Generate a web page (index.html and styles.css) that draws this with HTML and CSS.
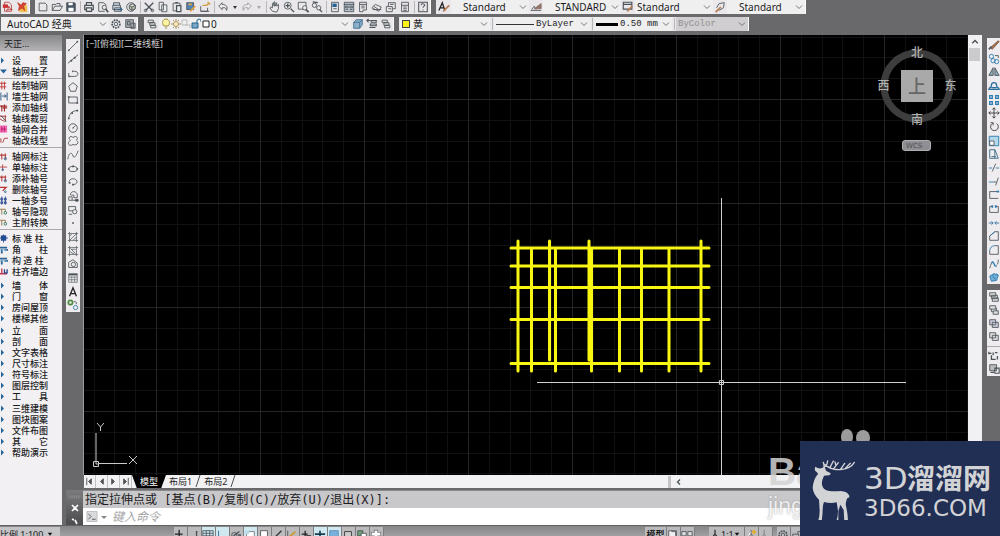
FILE: index.html
```html
<!DOCTYPE html>
<html lang="zh-CN">
<head>
<meta charset="utf-8">
<title>AutoCAD 经典</title>
<link rel="stylesheet" href="styles.css">
</head>
<body>
<svg class="defs" aria-hidden="true">
  <symbol id="chev" viewBox="0 0 8 8"><path d="M1 2.5l3 3 3-3"/></symbol>
  <symbol id="tri" viewBox="0 0 8 8"><path d="M1 1l3 3-3 3z" fill="#24659a" stroke="none"/></symbol>
  <symbol id="page" viewBox="0 0 14 14"><path d="M2.500 2.500h7l2 2v7h-9z"/></symbol>
  <symbol id="copy" viewBox="0 0 14 14"><path d="M2.500 1.500h5v9h-5zM5.500 4.500h6v8h-6z" fill="#eee"/></symbol>
  <symbol id="axis" viewBox="0 0 9 9"><path d="M0 3h7M2 1v7M6 1v7" stroke="#b8433f" stroke-width="1.300"/><circle cx="6" cy="7" r="1.300" stroke="#2b6f96"/></symbol>
  <symbol id="pillar" viewBox="0 0 9 9"><path d="M0 2.500h8M2 4v5M5 5h4" stroke="#2b6292" stroke-width="2"/><path d="M0 5h8" stroke="#86b4d4"/></symbol>
  <symbol id="layers" viewBox="0 0 14 14"><path d="M2.500 2.500h6v3h-6zM4.500 5.500h6v3h-6zM5.500 8.500h6v3h-6z" fill="#ddd"/></symbol>
</svg>

<header class="bars">
  <div class="bar">
    <div class="group">
      <button class="tool" aria-label="导出 PDF"><svg viewBox="0 0 14 14"><path d="M3 1.500h5l3 3V12H3z" stroke="#b44"/><path d="M1 4h6v4H1z" fill="#cc3034" stroke="none"/><path d="M5 11c2-1 3-4 3-5 1 3 3 4 4 4-2 0-5 0-7 1z" stroke="#b33"/></svg></button>
      <button class="tool" aria-label="附着 PDF"><svg viewBox="0 0 14 14"><path d="M4 5h9v8H4z" fill="#f0c04c" stroke="none"/><path d="M2 2l4 3 2-3 4 1-3 3 1 5-3-3-4 3 1-5z" fill="#d5462f" stroke="#c63a30"/></svg></button>
    </div>
    <div class="group">
      <button class="tool" aria-label="新建"><svg><use href="#page"/></svg></button>
      <button class="tool" aria-label="打开"><svg viewBox="0 0 14 14"><path d="M1.500 11V4h4l1-1h4v3M1.500 11l3-5h9l-3 5z"/></svg></button>
      <button class="tool" aria-label="保存"><svg viewBox="0 0 14 14"><path d="M2 2h9l1 1v9H2z" fill="#485563"/><path d="M4 2h5v3H4zM4 8h6v4H4z" fill="#fff" stroke="none"/></svg></button>
      <i class="sep"></i>
      <button class="tool" aria-label="打印"><svg viewBox="0 0 14 14"><path d="M4 5V2h6v3M4 10H2V5h10v5h-2M4 8h6v4H4z" stroke-width="1.400"/></svg></button>
      <button class="tool" aria-label="打印预览"><svg viewBox="0 0 14 14"><path d="M9 12H2V2h6l3 3"/><circle cx="8.500" cy="7.500" r="2.500"/><path d="M10 9l3 4" stroke-width="2"/></svg></button>
      <button class="tool" aria-label="发布"><svg viewBox="0 0 14 14"><path d="M3 5V2h7v3M2 5h9v5H2zM4 8h8v4H4z" fill="#c6d1dc"/><path d="M8 10h5M11 8l2 2-2 2" stroke="#245f91"/></svg></button>
      <button class="tool" aria-label="三维打印"><svg viewBox="0 0 14 14"><circle cx="7" cy="7" r="5"/><path d="M5 5l4-2 3 2v4l-4 2-3-2zM5 5l3 2 4-2M8 7v4" fill="#b9bea5"/></svg></button>
      <i class="sep"></i>
      <button class="tool" aria-label="剪切"><svg viewBox="0 0 14 14"><path d="M2 2l9 9M12 2l-9 9" stroke-width="1.500"/><circle cx="3" cy="11" r="1.500"/><circle cx="11" cy="11" r="1.500"/></svg></button>
      <button class="tool" aria-label="复制"><svg><use href="#copy"/></svg></button>
      <button class="tool" aria-label="粘贴"><svg viewBox="0 0 14 14"><path d="M2.500 2.500h8v9h-8z"/><path d="M5 2h3M6.500 5.500h5v7h-5z" fill="#eee" stroke-width="1.500"/></svg></button>
      <button class="tool" aria-label="特性匹配"><svg viewBox="0 0 14 14"><path d="M2 2h8v8H2z" fill="#4f83b4"/><path d="M4 4h4M12 6l-6 6" stroke="#e3a64a" stroke-width="2"/></svg></button>
      <button class="tool" aria-label="块编辑器"><svg viewBox="0 0 14 14"><path d="M2 6v6h8V8M2 12h10"/><path d="M4 5h5l3-3M10 1l3 3" stroke="#cf9a42" stroke-width="1.500"/></svg></button>
      <i class="sep"></i>
      <button class="tool" aria-label="放弃"><svg viewBox="0 0 14 14"><path d="M6 2L2 6l4 4V8c4-1 5 1 5 3 2-4 0-7-5-7z"/></svg></button>
      <button class="tool mini" aria-label="放弃列表"><svg viewBox="0 0 8 8"><path d="M2 3h4L4 6z" fill="#333" stroke="none"/></svg></button>
      <button class="tool dim" aria-label="重做"><svg viewBox="0 0 14 14"><path d="M8 2l4 4-4 4V8C4 7 3 9 3 11 1 7 3 4 8 4z"/></svg></button>
      <button class="tool mini dim" aria-label="重做列表"><svg viewBox="0 0 8 8"><path d="M2 3h4L4 6z" fill="#666" stroke="none"/></svg></button>
      <i class="sep"></i>
      <button class="tool" aria-label="平移"><svg viewBox="0 0 14 14"><path d="M4 12L1 8l1-1 2 1V3l1-1 1 4V1h1v5l2-4v4l2-2v5l-2 4z"/></svg></button>
      <button class="tool" aria-label="实时缩放"><svg viewBox="0 0 14 14"><circle cx="5.500" cy="5.500" r="4"/><path d="M3 5.500h5M5.500 3v5M9 9l4 4" stroke-width="1.500"/></svg></button>
      <button class="tool" aria-label="窗口缩放"><svg viewBox="0 0 14 14"><path d="M1.500 1.500h9v8h-9z"/><circle cx="9" cy="8" r="2.500" fill="#eee"/><path d="M10.500 10l3 3" stroke-width="2"/></svg></button>
      <button class="tool" aria-label="缩放上一个"><svg viewBox="0 0 14 14"><circle cx="4" cy="5" r="2.500"/><circle cx="9" cy="8" r="2.500"/><path d="M2 1l6 1M10 10l3 3" stroke-width="1.500"/></svg></button>
      <i class="sep"></i>
      <button class="tool" aria-label="特性"><svg viewBox="0 0 14 14"><path d="M3 1.500h8v11H3z"/><path d="M4 3h5v4H4z" fill="#236197" stroke="none"/><path d="M5 9h4"/></svg></button>
      <button class="tool" aria-label="设计中心"><svg viewBox="0 0 14 14"><path d="M1.500 1.500h11v11h-11zM1 4h12M3 6h3v2H3zM8 6h3v2H8zM3 10h3M8 10h3" fill="#bcc5cf"/></svg></button>
      <button class="tool" aria-label="工具选项板"><svg viewBox="0 0 14 14"><path d="M3 1.500h8v9H7v2H3zM3 4h8M5 6h4M5 8h4"/></svg></button>
      <button class="tool" aria-label="图纸集"><svg viewBox="0 0 14 14"><path d="M1 8l4-4 7 3-3 5zM2 10h10M3 6l6 4"/></svg></button>
      <button class="tool" aria-label="标记集"><svg viewBox="0 0 14 14"><path d="M1.500 6.500h7v6h-7zM4 6V2h8v7H9M4 9h3M6 4h4"/></svg></button>
      <button class="tool" aria-label="计算器"><svg viewBox="0 0 14 14"><path d="M3 1.500h8v11H3zM3 5h8M5 7h4M5 9h4M5 11h4"/></svg></button>
      <i class="sep"></i>
      <button class="tool" aria-label="帮助"><svg viewBox="0 0 14 14"><path d="M2 1.500h10v11H2zM5 5c0-3 4-2 4 0 0 1-2 1-2 3M7 10v1" stroke-width="1.200"/></svg></button>
    </div>
    <div class="group">
      <button class="tool" aria-label="文字样式"><svg viewBox="0 0 14 14"><path d="M1 11l4-9 3 9M3 8h4" stroke="#222" stroke-width="1.500"/><path d="M6 12l7-7" stroke="#b87b4e" stroke-width="2"/></svg></button>
      <label class="combo w78 indent"><select aria-label="文字样式名"><option>Standard</option></select><svg><use href="#chev"/></svg></label>
      <button class="tool" aria-label="标注样式"><svg viewBox="0 0 14 14"><path d="M1 11h12M2 10l3-4 2 4"/><path d="M5 9l8-6v6z" fill="#8e7266" stroke="#8e7266"/></svg></button>
      <label class="combo w78 indent"><select aria-label="标注样式名"><option>STANDARD</option></select><svg><use href="#chev"/></svg></label>
      <button class="tool" aria-label="表格样式"><svg viewBox="0 0 14 14"><path d="M1.500 1.500h10v8h-10zM2 4h10" stroke-width="1.300"/><path d="M6 12l6-6" stroke="#b87b4e" stroke-width="2"/></svg></button>
      <label class="combo w78"><select aria-label="表格样式名"><option>Standard</option></select><svg><use href="#chev"/></svg></label>
      <button class="tool" aria-label="多重引线样式"><svg viewBox="0 0 14 14"><path d="M3 8l3-5 6-1-1 6-5 3"/><path d="M2 13l6-6" stroke="#b87b4e" stroke-width="2"/></svg></button>
      <label class="combo w78 indent"><select aria-label="多重引线样式名"><option>Standard</option></select><svg><use href="#chev"/></svg></label>
    </div>
  </div>

  <div class="bar">
    <div class="group">
      <label class="combo w108 pad"><select aria-label="工作空间"><option>AutoCAD 经典</option></select><svg><use href="#chev"/></svg></label>
      <button class="tool" aria-label="工作空间设置"><svg viewBox="0 0 14 14"><circle cx="7" cy="7" r="4.500" stroke-width="2" stroke-dasharray="2 1"/><circle cx="7" cy="7" r="2"/></svg></button>
      <button class="tool" aria-label="我的工作空间"><svg viewBox="0 0 14 14"><path d="M2 2h9v9H2zM4 4h3v4H4zM8 6h5v6H8z" fill="#a8adb2"/></svg></button>
    </div>
    <div class="group late">
      <button class="tool" aria-label="图层特性"><svg><use href="#layers"/></svg></button>
      <label class="combo w192">
        <svg class="ic" viewBox="0 0 10 14"><path d="M3 9C0 6 2 2 5 2s5 4 2 7zM4 11h2" stroke="#9b8d42" fill="#fdf3a5"/></svg>
        <svg class="ic" viewBox="0 0 10 14"><circle cx="5" cy="7" r="2.500" stroke="#b0965c" fill="#f8ecc5"/><path d="M5 2v2M5 10v2M0 7h2M8 7h2M2 3l1 1M8 3L7 4M2 11l1-1M8 11l-1-1" stroke="#a88f5d"/></svg>
        <svg class="ic" viewBox="0 0 10 14"><path d="M1 3h5v5H1zM4 8h5v3" stroke="#bbb"/></svg>
        <svg class="ic" viewBox="0 0 10 14"><path d="M1 6h6v5H1z" fill="#78a8c6" stroke="#24658e"/><path d="M6 6V3l2-1 2 1v2" stroke="#24658e"/></svg>
        <svg class="ic" viewBox="0 0 10 14"><path d="M2 4h6v6H2z" stroke="#222" fill="#fff"/></svg>
        <select aria-label="图层"><option>0</option></select><svg><use href="#chev"/></svg></label>
      <button class="tool" aria-label="图层置为当前"><svg viewBox="0 0 14 14"><path d="M2 5l3-3h7v6l-3 4H2zM2 5h7v7M9 5l3-3" fill="#8dafc9" stroke="#3e6d90"/></svg></button>
      <button class="tool" aria-label="上一个图层"><svg viewBox="0 0 14 14"><path d="M6 3h6v2H6zM5 7h7v2H5zM4 11h7M5 3H1M3 1L1 3l2 2" stroke-width="1.200"/></svg></button>
      <button class="tool" aria-label="图层状态管理器"><svg><use href="#layers"/></svg></button>
    </div>
    <div class="group">
      <label class="combo w90"><span class="swatch"></span><select aria-label="颜色"><option>黄</option></select><svg><use href="#chev"/></svg></label>
      <i class="sep"></i>
      <label class="combo w96 mono"><span class="line"></span><select aria-label="线型"><option>ByLayer</option></select><svg><use href="#chev"/></svg></label>
      <i class="sep"></i>
      <label class="combo w78 mono"><span class="line thick"></span><select aria-label="线宽"><option>0.50 mm</option></select><svg><use href="#chev"/></svg></label>
      <i class="sep"></i>
      <label class="combo w72 mono off"><select aria-label="打印样式" disabled><option>ByColor</option></select><svg><use href="#chev"/></svg></label>
    </div>
  </div>
</header>

<div class="main">
  <aside class="palette">
    <h1>天正...</h1>
    <nav class="menu" aria-label="天正菜单">
      <div class="set">
        <button><svg><use href="#tri"/></svg>设　　置</button>
        <button><svg viewBox="0 0 8 8"><path d="M0 2h7L3.500 6z" fill="#24659a" stroke="none"/></svg>轴网柱子</button>
      </div>
      <div class="set ruled">
        <button><svg viewBox="0 0 9 9"><path d="M0 2h7M0 6h7M2 0v9M5 0v9" stroke="#c23434"/></svg>绘制轴网</button>
        <button><svg viewBox="0 0 9 9"><path d="M1 0v9M8 0v9M2 4h5M5 2l2 2-2 2" stroke="#234e7c"/></svg>墙生轴网</button>
        <button><svg viewBox="0 0 9 9"><path d="M0 3h8M2 2v7M5 1v8M3 5h5" stroke="#a32c2c" stroke-width="1.300"/></svg>添加轴线</button>
        <button><svg viewBox="0 0 9 9"><path d="M0 2h7M6 1v7M0 5l5 3" stroke="#a32c2c"/><path d="M1 1l6 7" stroke="#444"/></svg>轴线裁剪</button>
        <button><svg viewBox="0 0 9 9"><path d="M0 0h8v8H0z" fill="#f56bb4" stroke="none"/><path d="M2 1v6M5 1v6M1 4h6" stroke="#b51e65"/></svg>轴网合并</button>
        <button><svg viewBox="0 0 9 9"><path d="M1 2v5M3 7l2-5h4" stroke="#a33"/></svg>轴改线型</button>
      </div>
      <div class="set ruled">
        <button><svg><use href="#axis"/></svg>轴网标注</button>
        <button><svg viewBox="0 0 9 9"><path d="M0 4h8M3 1v7" stroke="#b8433f"/><circle cx="3" cy="7" r="1" stroke="#276e97"/></svg>单轴标注</button>
        <button><svg><use href="#axis"/></svg>添补轴号</button>
        <button><svg viewBox="0 0 9 9"><path d="M0 2h7L3 6" stroke="#b8332f" stroke-width="1.400"/><circle cx="6" cy="7" r="1" stroke="#276e97"/></svg>删除轴号</button>
        <button><svg viewBox="0 0 9 9"><path d="M2 0v9M6 0v9" stroke="#28498f"/><path d="M1 2h2v2H1zM5 2h2v2H5zM1 6h2v2H1zM5 6h2v2H5z" stroke="#28498f"/></svg>一轴多号</button>
        <button><svg viewBox="0 0 9 9"><path d="M0 2h6v3M2 2v6" stroke="#927339"/><circle cx="6" cy="6" r="1.500" stroke="#28785e"/></svg>轴号隐现</button>
        <button><svg viewBox="0 0 9 9"><path d="M0 2h6v3M2 2v6" stroke="#927339"/><circle cx="6" cy="6" r="1.500" stroke="#28785e"/></svg>主附转换</button>
      </div>
      <div class="set ruled wide">
        <button><svg viewBox="0 0 9 9"><path d="M1 1h6v6H1z" fill="#214d91" stroke="none"/><path d="M0 4h9M4 0v9" stroke="#214d91"/></svg>标 准 柱</button>
        <button><svg><use href="#pillar"/></svg>角　　柱</button>
        <button><svg><use href="#pillar"/></svg>构 造 柱</button>
        <button><svg viewBox="0 0 9 9"><path d="M0 7h8M2 1v7" stroke="#c33750" stroke-width="1.500"/><path d="M5 2v4h3V2" stroke="#284c92" stroke-width="1.500"/></svg>柱齐墙边</button>
      </div>
      <div class="set">
        <button><svg><use href="#tri"/></svg>墙　　体</button>
        <button><svg><use href="#tri"/></svg>门　　窗</button>
        <button><svg><use href="#tri"/></svg>房间屋顶</button>
        <button><svg><use href="#tri"/></svg>楼梯其他</button>
      </div>
      <div class="set">
        <button><svg><use href="#tri"/></svg>立　　面</button>
        <button><svg><use href="#tri"/></svg>剖　　面</button>
        <button><svg><use href="#tri"/></svg>文字表格</button>
        <button><svg><use href="#tri"/></svg>尺寸标注</button>
        <button><svg><use href="#tri"/></svg>符号标注</button>
        <button><svg><use href="#tri"/></svg>图层控制</button>
        <button><svg><use href="#tri"/></svg>工　　具</button>
      </div>
      <div class="set">
        <button><svg><use href="#tri"/></svg>三维建模</button>
        <button><svg><use href="#tri"/></svg>图块图案</button>
        <button><svg><use href="#tri"/></svg>文件布图</button>
        <button><svg><use href="#tri"/></svg>其　　它</button>
        <button><svg><use href="#tri"/></svg>帮助演示</button>
      </div>
    </nav>
  </aside>

  <div class="work">
    <div class="upper">
      <div class="rail draw">
        <button aria-label="直线"><svg viewBox="0 0 14 14"><path d="M2 12L12 2"/><path d="M2 12h0M12 2h0" stroke-width="2" stroke-linecap="round"/></svg></button>
        <button aria-label="构造线"><svg viewBox="0 0 14 14"><path d="M1 12L13 2"/><path d="M5 9h0M9 5.500h0" stroke-width="2.500" stroke-linecap="round"/></svg></button>
        <button aria-label="多段线"><svg viewBox="0 0 14 14"><path d="M2 11h7c5 0 5-6 0-6H7M2 7v4"/><path d="M2 11h1M6 5h1" stroke-width="2"/></svg></button>
        <button aria-label="多边形"><svg viewBox="0 0 14 14"><path d="M7 2l5 4-2 6H4L2 6z"/></svg></button>
        <button aria-label="矩形"><svg viewBox="0 0 14 14"><path d="M2 3.500h10v7H2z"/><path d="M1 3.500h2M11 10.500h2" stroke-width="2"/></svg></button>
        <button aria-label="圆弧"><svg viewBox="0 0 14 14"><path d="M2 12C3 6 7 3 12 3"/><path d="M1 12h2M5 6h2M11 3h2" stroke-width="2"/></svg></button>
        <button aria-label="圆"><svg viewBox="0 0 14 14"><circle cx="7" cy="7" r="5"/><path d="M7 7l3-3M6 7h2"/></svg></button>
        <button aria-label="修订云线"><svg viewBox="0 0 14 14"><path d="M4 6C0 3 5 0 7 3c3-3 7 0 4 3 4 3 0 7-4 5-4 3-8-1-3-5z"/></svg></button>
        <button aria-label="样条曲线"><svg viewBox="0 0 14 14"><path d="M1 12C2 3 6 4 7 8s4 0 6-6"/></svg></button>
        <button aria-label="椭圆"><svg viewBox="0 0 14 14"><ellipse cx="7" cy="7" rx="5" ry="3"/><path d="M1 7h2M11 7h2M6 4h2" stroke-width="2"/></svg></button>
        <button aria-label="椭圆弧"><svg viewBox="0 0 14 14"><path d="M3 8C1 4 7 2 10 4s2 6-3 6"/><path d="M6 10h2M2 8h2" stroke-width="2"/></svg></button>
        <button aria-label="插入块"><svg viewBox="0 0 14 14"><path d="M4 6c0-6 8-5 8 0v3H8V6H5M2 8h4v4H2zM6 12h6"/><path d="M10 11h3v2h-3z" fill="#444"/></svg></button>
        <button aria-label="创建块"><svg viewBox="0 0 14 14"><path d="M2 3h8v5H2z"/><circle cx="9" cy="9" r="2.500" fill="#eee"/><path d="M2 12h4"/></svg></button>
        <button aria-label="点"><svg viewBox="0 0 14 14"><path d="M6 7h2" stroke-width="2"/></svg></button>
        <button aria-label="图案填充"><svg viewBox="0 0 14 14"><path d="M3 1v12M11 1v12M1 3h12M1 11h12M3 6l3-3M3 11l8-8M7 11l4-4" stroke="#666c70"/></svg></button>
        <button aria-label="渐变色"><svg viewBox="0 0 14 14"><path d="M3 1v12M11 1v12M1 3h12M1 11h12M4 4l6 6M4 8l5 3M5 5h5" stroke="#666c70"/></svg></button>
        <button aria-label="面域"><svg viewBox="0 0 14 14"><path d="M2 11V5l5-3 5 4v5z"/><circle cx="7.500" cy="7.500" r="2.500"/></svg></button>
        <button aria-label="表格"><svg viewBox="0 0 14 14"><path d="M2 2h10v10H2zM2 6h10M2 9h10M5.500 5v7M9 5v7" stroke="#777d81"/><path d="M2 3h10" stroke-width="2"/></svg></button>
        <button aria-label="多行文字"><svg viewBox="0 0 14 14"><path d="M3 12L7 2l4 10M4.500 9h5" stroke="#222" stroke-width="1.500"/></svg></button>
        <button aria-label="添加选定对象"><svg viewBox="0 0 14 14"><circle cx="4" cy="4" r="2.500" stroke="#4d8b40" stroke-width="2"/><circle cx="10" cy="10" r="2.500" stroke="#3380b2"/><path d="M8 3c3 0 3 1 3 3"/></svg></button>
      </div>

      <div class="view">
        <div class="stage">
          <svg class="drawing" role="img" aria-label="轴网图">
            <defs>
              <pattern id="grid" x="72" y="64" width="104" height="104" patternUnits="userSpaceOnUse">
                <path d="M21.500 0v104M42.500 0v104M62.500 0v104M83.500 0v104M0 21.500h104M0 42.500h104M0 62.500h104M0 83.500h104" stroke="#101113"/>
                <path d="M.5 0v104M0 .5h104" stroke="#232529"/>
              </pattern>
            </defs>
            <rect width="100%" height="100%" fill="url(#grid)" stroke="none"/>
            <g transform="translate(-84 -35)">
              <path d="M518 241v130M531.500 250v121M549.500 241v119M555.500 250v121M589 241v119M591.500 250v121M619.500 250v121M641.500 250v121M669 250v121M701 241v130M511 248h198M511 266h198M511 287.500h198M511 319.500h198M511 363.500h198" stroke="#f9f612" stroke-width="3" stroke-linecap="round"/>
              <path d="M721.500 198v278M537 382.500h369M719.500 380.500h4v4h-4z" stroke="#d0d0d0"/>
              <path d="M96 461v-28M99 463.500h28M93.500 461.500h5v5h-5zM96 461v3h3M97 423l3.500 4v4M104 423l-3.500 4M129 456l8 8M137 456l-8 8" stroke="#c9c9c9"/>
            </g>
          </svg>
          <span class="caption">[−][俯视][二维线框]</span>
          <div class="cube">
            <svg class="ring" viewBox="0 0 82 82"><circle cx="41" cy="41" r="33" stroke="#3d3d3e" stroke-width="7"/></svg>
            <span class="n">北</span><span class="w">西</span><button class="top">上</button><span class="e">东</span><span class="s">南</span>
          </div>
          <button class="wcs">WCS</button>
        </div>
        <div class="vscroll"><svg viewBox="0 0 14 14"><path d="M4 9l3-3 3 3" stroke-width="1.500"/></svg><i></i></div>
      </div>

      <div class="right">
        <div class="rail modify">
          <button aria-label="删除"><svg viewBox="0 0 14 14"><path d="M3 10l2 2 8-9-1-1z" fill="#a8754f" stroke="#76513b"/><path d="M1 12l3-3" stroke-width="2"/></svg></button>
          <button aria-label="复制对象"><svg viewBox="0 0 14 14"><circle cx="4" cy="4" r="2.500" stroke="#2779b0"/><circle cx="6" cy="9" r="2.500" stroke="#2779b0"/><circle cx="10" cy="10" r="2.500" stroke="#2779b0"/><path d="M8 3h4v3"/></svg></button>
          <button aria-label="镜像"><svg viewBox="0 0 14 14"><path d="M6 2v9H1zM8 2v9h5z" fill="#8aa9bd"/></svg></button>
          <button aria-label="偏移"><svg viewBox="0 0 14 14"><path d="M1 11c0-3 3-1 3-5s6-4 6 0 3 2 3 5zM4 9h6" stroke="#2b6e9e" stroke-width="1.500"/></svg></button>
          <button aria-label="阵列"><svg viewBox="0 0 14 14"><path d="M2 2h3v3H2zM9 2h3v3H9zM2 9h3v3H2zM9 9h3v3H9z" stroke="#2779b0" stroke-width="1.500"/></svg></button>
          <button aria-label="移动"><svg viewBox="0 0 14 14"><path d="M7 1v12M1 7h12M5 3l2-2 2 2M5 11l2 2 2-2M3 5L1 7l2 2M11 5l2 2-2 2" stroke="#333"/></svg></button>
          <button aria-label="旋转"><svg viewBox="0 0 14 14"><path d="M5 3a4.500 4.500 0 1 0 5 0M3 2h3v3" stroke="#333"/></svg></button>
          <button aria-label="缩放"><svg viewBox="0 0 14 14"><path d="M1.500 1.500h11v11h-11z" fill="#b5d8eb" stroke="#2779b0"/><path d="M2 7h5v5H2z" fill="#fff"/></svg></button>
          <button aria-label="拉伸"><svg viewBox="0 0 14 14"><path d="M2 2h6v10H2zM8 2l4 10H8M4 10h5" stroke="#31627f"/></svg></button>
          <button aria-label="修剪"><svg viewBox="0 0 14 14"><path d="M1 7h4M9 7h4" stroke="#2779b0"/><path d="M5 11l4-9"/></svg></button>
          <button aria-label="延伸"><svg viewBox="0 0 14 14"><path d="M1 7h6" stroke="#2779b0"/><path d="M7 7h3M9 11l3-9"/></svg></button>
          <button aria-label="打断于点"><svg viewBox="0 0 14 14"><path d="M12 3H2v8h10"/><path d="M10 3h3" stroke="#2779b0" stroke-width="2"/></svg></button>
          <button aria-label="打断"><svg viewBox="0 0 14 14"><path d="M5 4H2v7h10V4H9"/><path d="M4 4h2M8 4h2" stroke="#2779b0" stroke-width="3"/></svg></button>
          <button aria-label="合并"><svg viewBox="0 0 14 14"><path d="M1 7h5M8 7h5M4 5l2 2-2 2M10 5L8 7l2 2" stroke="#2d6f9c"/></svg></button>
          <button aria-label="倒角"><svg viewBox="0 0 14 14"><path d="M2 7l6-5h4v10H2z"/><path d="M2 7l6-5" stroke="#2779b0"/></svg></button>
          <button aria-label="圆角"><svg viewBox="0 0 14 14"><path d="M2 8v4h10V2H8"/><path d="M2 8c0-3 2-6 6-6" stroke="#2779b0"/></svg></button>
          <button aria-label="光顺曲线"><svg viewBox="0 0 14 14"><path d="M2 12c1-2 1-4 2-6M10 8c2-1 2-4 2-6"/><path d="M4 6c3-5 3 6 6 3" stroke="#2779b0" stroke-width="1.500"/></svg></button>
          <button aria-label="分解"><svg viewBox="0 0 14 14"><path d="M2 6l5-3 5 2-2 6-6 1zM5 5l4 5M10 3l2 2" fill="#70aed5" stroke="#2779b0"/></svg></button>
        </div>
        <div class="rail order">
          <button aria-label="前置"><svg viewBox="0 0 14 14"><path d="M2 2h7v4H2zM5 8h7v4H5zM4 5h7v4H4z" fill="#ddd"/></svg></button>
          <button aria-label="后置"><svg viewBox="0 0 14 14"><path d="M2 2h7v4H2zM6 8h6v4H6zM4 6v3h2M9 5h1v3" fill="#ddd"/></svg></button>
          <button aria-label="置于对象之上"><svg viewBox="0 0 14 14"><path d="M2 2h7v6H2zM5 5h7v6H5z" fill="#ccd"/></svg></button>
          <button aria-label="置于对象之下"><svg viewBox="0 0 14 14"><path d="M5 5h7v6H5zM2 2h7v6H2z" fill="#ddd"/></svg></button>
          <i class="rule"></i>
          <button aria-label="注释前置"><svg viewBox="0 0 14 14"><path d="M1 4h3M6 3v3M8 3h3M4 6v5h5M11 7v4M1 2v3" stroke-width="1.500"/></svg></button>
          <button aria-label="填充后置"><svg viewBox="0 0 14 14"><path d="M2 2h8v7H2z" fill="#bbb"/><path d="M8 6h5v6H8zM3 11h4" stroke-width="1.300"/></svg></button>
        </div>
      </div>
    </div>

    <div class="tabs">
      <button class="nav" aria-label="第一个"><svg viewBox="0 0 12 12"><path d="M3 2v8"/><path d="M8 3v6L5 6z" fill="#555"/></svg></button>
      <button class="nav" aria-label="上一个"><svg viewBox="0 0 12 12"><path d="M8 3v6L5 6z" fill="#555"/></svg></button>
      <button class="nav" aria-label="下一个"><svg viewBox="0 0 12 12"><path d="M4 3v6l3-3z" fill="#555"/></svg></button>
      <button class="nav" aria-label="最后一个"><svg viewBox="0 0 12 12"><path d="M9 2v8"/><path d="M4 3v6l3-3z" fill="#555"/></svg></button>
      <button class="tab active">模型</button>
      <button class="tab">布局1</button><svg class="slash" viewBox="0 0 6 12"><path d="M1 12L5 0"/></svg>
      <button class="tab">布局2</button><svg class="slash" viewBox="0 0 6 12"><path d="M1 12L5 0"/></svg>
      <span class="hscroll"><i></i><svg viewBox="0 0 8 8"><path d="M5 1.500L2.500 4 5 6.500" stroke-width="1.300"/></svg></span>
    </div>

    <div class="command">
      <div class="grip">
        <svg class="dots" viewBox="0 0 16 4"><path d="M1 1h14M1 3h14" stroke="#a5a5a6" stroke-dasharray="1 1"/></svg>
        <button aria-label="关闭"><svg viewBox="0 0 8 8"><path d="M1 1l6 6M7 1L1 7" stroke="#fff" stroke-width="1.700"/></svg></button>
        <button aria-label="自定义"><svg viewBox="0 0 8 8"><path d="M1 2l2 1M4 3l2 4" stroke="#fff" stroke-width="1.700"/></svg></button>
      </div>
      <div class="console">
        <p>指定拉伸点或 [基点(B)/复制(C)/放弃(U)/退出(X)]:</p>
        <div class="entry">
          <svg class="prompt" viewBox="0 0 12 12"><path d="M.5.500h11v11H.500z" fill="#d9dadc" stroke="#bbb"/><path d="M2 3l3 3-3 3M6 9h4" stroke="#555"/></svg>
          <svg class="drop" viewBox="0 0 8 8"><path d="M1 3h6L4 6z" fill="#888" stroke="none"/></svg>
          <input type="text" aria-label="命令" placeholder="键入命令">
        </div>
      </div>
    </div>
  </div>
</div>

<footer class="status">
  <button class="scale">比例 1:100 <svg viewBox="0 0 8 8"><path d="M1 1h6L4 5z" fill="#111" stroke="none"/></svg></button>
  <div class="toggles">
    <button aria-label="推断约束"><svg viewBox="0 0 14 14"><path d="M6 1v12M1 6h9M8 8l4 4" stroke="#222" stroke-width="1.500"/></svg></button>
    <button aria-label="捕捉"><svg viewBox="0 0 14 14"><path d="M10 3v8H3M9 3h2" stroke-width="1.500"/></svg></button>
    <button aria-label="栅格" class="on"><svg viewBox="0 0 14 14"><path d="M1 2h12v10H1zM1 5h12M1 8h12M5 2v10M9 2v10"/></svg></button>
    <button aria-label="正交" class="on"><svg viewBox="0 0 14 14"><path d="M3 2v8h9" stroke="#26638f"/></svg></button>
    <button aria-label="极轴"><svg viewBox="0 0 14 14"><circle cx="5" cy="7" r="3"/><path d="M4 8l7-5M9 7h3v4H9" stroke-width="1.500"/></svg></button>
    <button aria-label="对象捕捉" class="on"><svg viewBox="0 0 14 14"><path d="M3 3h9v9H3z" fill="#fff" stroke="#777"/><path d="M1 2h5v4H1z" fill="#b9dceb" stroke="none"/></svg></button>
    <button aria-label="三维捕捉"><svg viewBox="0 0 14 14"><path d="M3 2h8v8l-4 2-4-2z" fill="#fff"/></svg></button>
    <button aria-label="对象追踪"><svg viewBox="0 0 14 14"><path d="M11 2L3 10h9" stroke="#333" stroke-width="1.500"/></svg></button>
    <button aria-label="动态 UCS"><svg viewBox="0 0 14 14"><path d="M2 2v9h10"/><path d="M3 10l8-7" stroke="#cc9634" stroke-width="2"/></svg></button>
    <button aria-label="动态输入"><svg viewBox="0 0 14 14"><path d="M2 6h7M6 2v8M8 8h4v3H8z" stroke="#222" stroke-width="1.500"/></svg></button>
    <button aria-label="线宽" class="on"><svg viewBox="0 0 14 14"><path d="M1 6h12M7 2v9" stroke="#173c50" stroke-width="2"/></svg></button>
    <button aria-label="透明度" class="on"><svg viewBox="0 0 14 14"><path d="M2 2h10v9H2z" fill="#79b1dc" stroke="#568bb4"/></svg></button>
    <button aria-label="快捷特性"><svg viewBox="0 0 14 14"><path d="M3 3h8v7H3z" fill="#ccc" stroke="#333"/></svg></button>
    <button aria-label="选择循环"><svg viewBox="0 0 14 14"><path d="M2 2h6v6H2z" fill="#6ba176"/><path d="M6 5h6v6H6z" fill="#fff"/></svg></button>
    <button aria-label="注释监视"><svg viewBox="0 0 14 14"><path d="M7 1v12M1 6h12" stroke="#777" stroke-width="5"/><path d="M7 2v10M2 6h10" stroke="#fff" stroke-width="3"/></svg></button>
  </div>
  <div class="settings">
    <button class="model">模型</button>
    <button aria-label="布局"><svg viewBox="0 0 14 14"><path d="M2 2h9v9H2z" fill="#eee"/><path d="M5 3h5v5"/></svg></button>
    <button aria-label="快速查看"><svg viewBox="0 0 14 14"><path d="M1 3h5v5H1zM8 3h5v5H8z" fill="#ddd"/></svg></button>
    <button class="ratio"><svg viewBox="0 0 14 14"><path d="M7 1v5L2 12M7 6l5 6" stroke="#333" stroke-width="1.500"/></svg>1:1 <svg class="arrow" viewBox="0 0 8 8"><path d="M1 1h6L4 5z" fill="#111" stroke="none"/></svg></button>
    <button aria-label="注释可见性"><svg viewBox="0 0 14 14"><path d="M7 1v5L2 12M7 6l5 6" fill="#fff"/><path d="M9 2l3 3" stroke="#e4ad2b" stroke-width="4"/></svg></button>
    <button aria-label="自动缩放"><svg viewBox="0 0 14 14"><path d="M6 1v5L1 12M6 6l5 6" stroke="#777"/></svg></button>
    <button class="gear" aria-label="切换工作空间"><svg viewBox="0 0 14 14"><circle cx="7" cy="7" r="4.500" stroke-width="2" stroke-dasharray="2 1"/><circle cx="7" cy="7" r="2"/></svg></button>
    <button aria-label="锁定"><svg viewBox="0 0 14 14"><path d="M2 6h7v6H2zM8 6V3h4v4"/></svg></button>
  </div>
</footer>

<div class="mark">
  <svg class="paw" viewBox="0 0 32 16"><ellipse cx="7" cy="8" rx="6" ry="8" fill="#b7b7b7" stroke="none"/><ellipse cx="23" cy="9" rx="7" ry="8" fill="#b7b7b7" stroke="none"/></svg>
  <b>Bai</b><span>jing</span>
</div>

<div class="brand">
  <svg class="deer" viewBox="0 0 132 180" role="img" aria-label="鹿">
    <path d="M10 20q9 7 17 5l9-3q5 3 6 10l14 8q0 5-5 6l-15 1q-8 16-6 27 3 15 18 18 15 3 38 1 20 1 26 14 1 6-4 7-4 1-4 5-4 10-2 20 5 18 6 45h-11l-2-34-10-16-6 20q0 12 0 30H72q6-10 6-32l-4-25q-18 5-38-1-4 9-4 22 0 16-3 35H18q5-12 5-31l-2-33Q4 103 2 84 4 57 18 42q-2-6-8-9Q7 27 10 20z" fill="#d2d3d5" stroke="none"/>
    <path d="M36 23q3-7 11-3 15 10 38 9 31-3 42-22M36 23q1-10-2-16M43 19L47 3M54 22L64 3M65 26L79 8M85 29l13-19M99 26l16-16M72 17L69 6M35 12l7 3" stroke="#d2d3d5" stroke-width="4" stroke-linecap="round" stroke-linejoin="round"/>
  </svg>
  <div class="words"><div class="name"><span>3D</span>溜溜网</div><div class="site">3D66.COM</div></div>
</div>
</body>
</html>
```
FILE: styles.css
```css
* { box-sizing: border-box; }

body {
  margin: 0;
  height: 100vh;
  overflow: hidden;
  position: relative;
  display: flex;
  flex-direction: column;
  background: #69686a;
  color: #1c1c1e;
  font-family: "Noto Sans", "Noto Sans CJK SC", sans-serif;
  font-size: 10px;
}

button, select, input {
  margin: 0;
  padding: 0;
  border: 0;
  background: none;
  color: inherit;
  font: inherit;
  appearance: none;
}

svg { display: block; fill: none; stroke: #4b5359; }
.defs { position: absolute; width: 0; height: 0; }

/* toolbars */
.bars { flex: none; display: flex; flex-direction: column; gap: 3px; }
.bar { display: flex; gap: 5px; height: 14px; padding-left: 1px; }
.group { display: flex; align-items: center; background: #e9e7e9; border-right: 1px solid #fafafa; flex: none; }
.group + .group { padding-left: 1px; }
.group.late { margin-left: 1px; }
.tool { flex: none; width: 14px; height: 14px; padding: 1px; }
.tool svg { width: 12px; height: 12px; }
.tool.mini { width: 10px; }
.tool.mini svg { width: 8px; height: 8px; }
.dim { opacity: .5; }
.sep { width: 1px; height: 12px; margin: 0 1px 0 2px; background: #b8b6b8; }
.combo { display: flex; align-items: center; height: 14px; padding: 0 2px; background: #f0eff0; line-height: 14px; }
.combo select { flex: 1; min-width: 0; height: 14px; line-height: 14px; overflow: hidden; }
.combo svg { flex: none; width: 8px; height: 8px; stroke: #777; }
.combo svg.ic { width: 10px; height: 14px; }
.indent { padding-left: 12px; }
.pad { padding-left: 6px; }
.w72 { width: 72px; }
.w78 { width: 78px; }
.w90 { width: 90px; }
.w96 { width: 96px; }
.w108 { width: 108px; }
.w192 { width: 192px; }
.mono { gap: 2px; font-family: "Liberation Mono", monospace; font-size: 9px; }
.off { background: #d0ced0; color: #929092; }
.off select { opacity: 1; }
.swatch { width: 8px; height: 8px; margin-right: 3px; background: #fbf318; border: 1px solid #444; }
.line { flex: none; width: 38px; height: 1px; background: #333; }
.line.thick { width: 22px; height: 3px; background: #000; }

/* menu palette */
.main { flex: 1; min-height: 0; display: flex; gap: 4px; padding-top: 4px; }
.palette { flex: none; width: 62px; background: #f2f0f2; }
.palette h1 { margin: 0; height: 16px; padding: 0 4px; font-size: 9px; font-weight: 400; line-height: 18px; background: linear-gradient(#878688, #b4b3b5); }
.menu { display: flex; flex-direction: column; padding-top: 4px; font-size: 9px; font-weight: 500; }
.set { display: flex; flex-direction: column; }
.set button { display: flex; align-items: center; gap: 4px; height: 11px; line-height: 11px; text-align: left; white-space: nowrap; }
.set button svg { flex: none; width: 8px; height: 9px; }
.set + .set { margin-top: 1px; }
.set.ruled { margin-top: 1px; padding-top: 1px; border-top: 1px solid #aaa; }
.ruled + .ruled { padding-top: 3px; }
.wide + .set { margin-top: 3px; }

/* workspace */
.work { flex: 1; min-width: 0; display: flex; flex-direction: column; }
.upper { flex: 1; min-height: 0; display: flex; }
.rail { display: flex; flex-direction: column; background: #eeecee; }
.rail button { flex: 1; display: grid; place-items: center; min-height: 0; }
.rail svg { width: 12px; height: 12px; }
.draw { flex: none; width: 14px; height: 273px; margin: 4px 3px 0 0; }
.view { flex: 1; min-width: 0; display: flex; border-left: 1px solid #9b9a9c; }
.stage { flex: 1; position: relative; overflow: hidden; background: #000; }
.drawing { width: 100%; height: 100%; }
.caption { position: absolute; left: 2px; top: 2px; color: #cfcfcf; font-size: 9px; line-height: 13px; }
.cube { position: absolute; right: 10px; top: 10px; width: 82px; height: 82px; display: grid; grid-template: 15px 1fr 15px / 15px 1fr 15px; place-items: center; color: #b0b0b0; font-size: 12px; font-weight: 500; line-height: 14px; }
.ring { position: absolute; inset: 0; }
.cube span, .cube button { position: relative; }
.n, .s { grid-column: 2; }
.n { grid-row: 1; }
.s { grid-row: 3; }
.w, .top, .e { grid-row: 2; }
.top { width: 32px; height: 32px; background: #a9a9aa; color: #666; font-size: 18px; line-height: 30px; }
.wcs { position: absolute; right: 37px; top: 105px; width: 29px; height: 11px; padding-left: 3px; border: 1px solid #b0b0b4; border-radius: 3px; background: #8f8f93; color: #505054; font: 7px/8px "DejaVu Sans", sans-serif; text-align: left; }
.vscroll { flex: none; width: 14px; background: #f1f0f2; }
.vscroll svg { height: 13px; width: 14px; }
.vscroll i { display: block; width: 11px; height: 13px; margin-left: 1px; background: #cbcacc; }
.right { flex: none; width: 18px; padding: 3px 0 0 5px; }
.modify { height: 246px; }
.order { height: 86px; margin-top: 6px; }
.rule { height: 1px; margin: 2px 0; background: #aaa; }

/* layout tabs */
.tabs { flex: none; display: flex; height: 13px; margin: 0 18px 0 18px; background: #f2f1f3; font-size: 9px; line-height: 12px; }
.nav { width: 12px; border-right: 1px solid #c2c1c3; }
.nav svg { width: 11px; height: 11px; stroke: #555; }
.tab { padding: 0 3px; height: 13px; }
.tab.active { width: 34px; color: #fff; background: #000; clip-path: polygon(0 0, 100% 0, 86% 100%, 14% 100%); }
.slash { width: 6px; height: 12px; }
.hscroll { display: flex; align-items: center; gap: 4px; margin-left: auto; width: 314px; }
.hscroll i { width: 3px; height: 12px; background: #c4c3c5; }
.hscroll svg { width: 8px; height: 8px; }

/* command line */
.command { flex: none; display: flex; margin-top: 2px; }
.grip { width: 17px; display: flex; flex-direction: column; align-items: center; gap: 5px; padding-top: 5px; background: linear-gradient(#7b7a7c, #4c4b4d); }
.dots { width: 14px; height: 4px; }
.grip button svg { width: 8px; height: 8px; }
.console { flex: 1; background: #fff; border-top: 1px solid #8b8a8c; }
.console p { height: 17px; margin: 0; padding-left: 2px; background: #c8c7c9; font: 12px/19px "DejaVu Sans Mono", "Noto Sans CJK SC", monospace; }
.entry { display: flex; align-items: center; gap: 2px; height: 17px; padding-left: 3px; }
.prompt { width: 12px; height: 11px; }
.drop { width: 8px; height: 8px; }
.entry input { flex: 1; margin-left: 2px; height: 17px; font-size: 12px; font-style: italic; }
.entry input::placeholder { color: #a4a3a5; opacity: 1; }

/* status bar */
.status { flex: none; display: flex; height: 11px; padding-top: 1px; background: linear-gradient(#858486, #a09fa1); border-top: 1px solid #626163; overflow: hidden; }
.status button { flex: none; width: 14px; height: 15px; border-right: 1px solid #7d7c7e; background: #bbbabc; }
.status button svg { width: 12px; height: 12px; }
.status .scale { display: flex; align-items: center; gap: 4px; width: 60px; border: 0; background: #c4c3c5; font-size: 9px; line-height: 14px; white-space: nowrap; }
.status .scale svg { width: 6px; height: 6px; flex: none; }
.toggles { display: flex; margin-left: 114px; }
.status .on { background: #d0e9f1; }
.settings { display: flex; margin-left: auto; margin-right: 195px; }
.status .model { width: 22px; font-size: 9px; font-weight: 700; line-height: 14px; }
.status .ratio { display: flex; align-items: center; width: 36px; margin-left: 14px; font-size: 9px; }
.status .ratio .arrow { width: 6px; height: 6px; }
.status .gear { margin-left: 4px; }

/* overlays */
.mark { position: absolute; right: 128px; bottom: 17px; width: 104px; display: flex; flex-direction: column; color: #d3d3d4; opacity: .85; font-family: "Liberation Sans", sans-serif; }
.paw { width: 32px; height: 16px; margin-left: 72px; }
.mark b { font-size: 39px; line-height: 42px; margin-top: 6px; }
.mark span { font-size: 23px; line-height: 26px; color: #f4f4f4; text-shadow: 0 0 2px #8d8d8f; }
.brand { position: absolute; right: 0; bottom: 0; width: 200px; height: 95px; display: flex; gap: 8px; padding: 19px 0 0 12px; background: #222f55; color: #d2d3d5; }
.deer { flex: none; width: 44px; height: 60px; }
.words { display: flex; flex-direction: column; white-space: nowrap; }
.name { display: flex; align-items: center; height: 37px; font-size: 28px; font-weight: 700; line-height: 37px; }
.name span { width: 43px; font: 31px/37px "DejaVu Sans", sans-serif; }
.site { font: 23px/23px "DejaVu Sans", sans-serif; }
```
